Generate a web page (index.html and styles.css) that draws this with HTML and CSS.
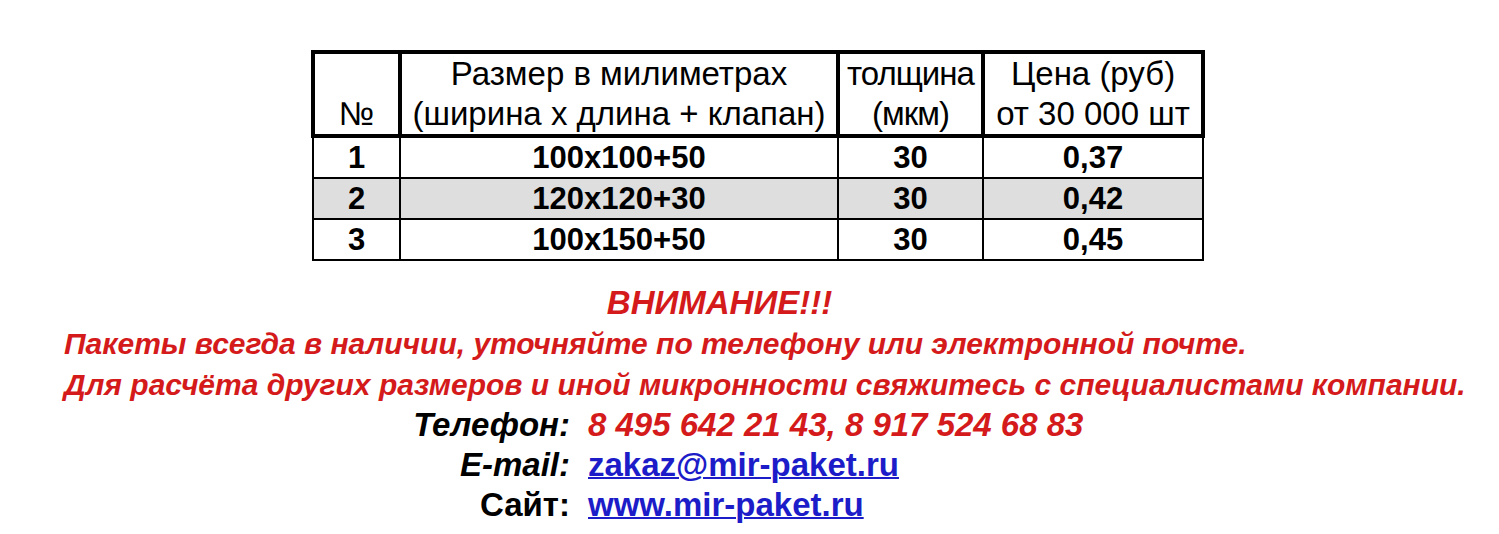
FILE: index.html
```html
<!DOCTYPE html>
<html lang="ru">
<head>
<meta charset="utf-8">
<title>Пакеты</title>
<link rel="stylesheet" href="styles.css">
</head>
<body>
<div class="page">
  <table class="price">
    <colgroup>
      <col class="c1"><col class="c2"><col class="c3"><col class="c4">
    </colgroup>
    <thead>
      <tr>
        <th class="num">№</th>
        <th>Размер в милиметрах<br>(ширина х длина + клапан)</th>
        <th class="tight">толщина<br>(мкм)</th>
        <th>Цена (руб)<br>от 30 000 шт</th>
      </tr>
    </thead>
    <tbody>
      <tr><td>1</td><td>100x100+50</td><td>30</td><td>0,37</td></tr>
      <tr class="alt"><td>2</td><td>120x120+30</td><td>30</td><td>0,42</td></tr>
      <tr><td>3</td><td>100x150+50</td><td>30</td><td>0,45</td></tr>
    </tbody>
  </table>

  <div class="notice">
    <div class="notice-title">ВНИМАНИЕ!!!</div>
    <div class="notice-line">Пакеты всегда в наличии, уточняйте по телефону или электронной почте.</div>
    <div class="notice-line">Для расчёта других размеров и иной микронности свяжитесь с специалистами компании.</div>
  </div>

  <div class="contacts">
    <div class="label">Телефон:</div>
    <div class="value phone">8 495 642 21 43, 8 917 524 68 83</div>
    <div class="label">E-mail:</div>
    <div class="value"><a class="link" href="#">zakaz@mir-paket.ru</a></div>
    <div class="label upright">Сайт:</div>
    <div class="value"><a class="link" href="#">www.mir-paket.ru</a></div>
  </div>
</div>
</body>
</html>
```
FILE: styles.css
```css
html, body {
  margin: 0;
  padding: 0;
  background: #ffffff;
}

.page {
  font-family: "Liberation Sans", Arial, sans-serif;
  color: #000;
  padding-top: 50px;
}

.price {
  border-collapse: collapse;
  margin-left: 311px;
  width: 890px;
  table-layout: fixed;
}

.c1 { width: 87px; }
.c2 { width: 438px; }
.c3 { width: 145px; }
.c4 { width: 220px; }

.price th {
  font-weight: normal;
  font-size: 33px;
  line-height: 40px;
  height: 80px;
  border: 4px solid #000;
  padding: 0;
  vertical-align: bottom;
  text-align: center;
  white-space: nowrap;
  overflow: visible;
}

.price th.tight {
  letter-spacing: -1px;
}

.price td {
  font-weight: bold;
  font-size: 31px;
  line-height: 39px;
  border: 2px solid #000;
  padding: 0;
  text-align: center;
}

.price tr.alt td {
  background: #dedede;
}

.notice {
  margin-top: 22px;
  color: #d41a1a;
  font-weight: bold;
  font-style: italic;
  font-size: 30px;
}

.notice-title {
  text-align: center;
  font-size: 33px;
  line-height: 40px;
  padding-right: 60px;
}

.notice-line {
  padding-left: 64px;
  line-height: 41px;
}

.contacts {
  display: grid;
  grid-template-columns: 570px auto;
  column-gap: 18px;
  font-weight: bold;
  font-size: 33px;
  line-height: 40px;
}

.label {
  text-align: right;
  font-style: italic;
}

.label.upright {
  font-style: normal;
}

.phone {
  color: #d41a1a;
  font-style: italic;
}

.link {
  color: #1c1cc8;
  text-decoration: underline;
  text-decoration-thickness: 2px;
}
```
